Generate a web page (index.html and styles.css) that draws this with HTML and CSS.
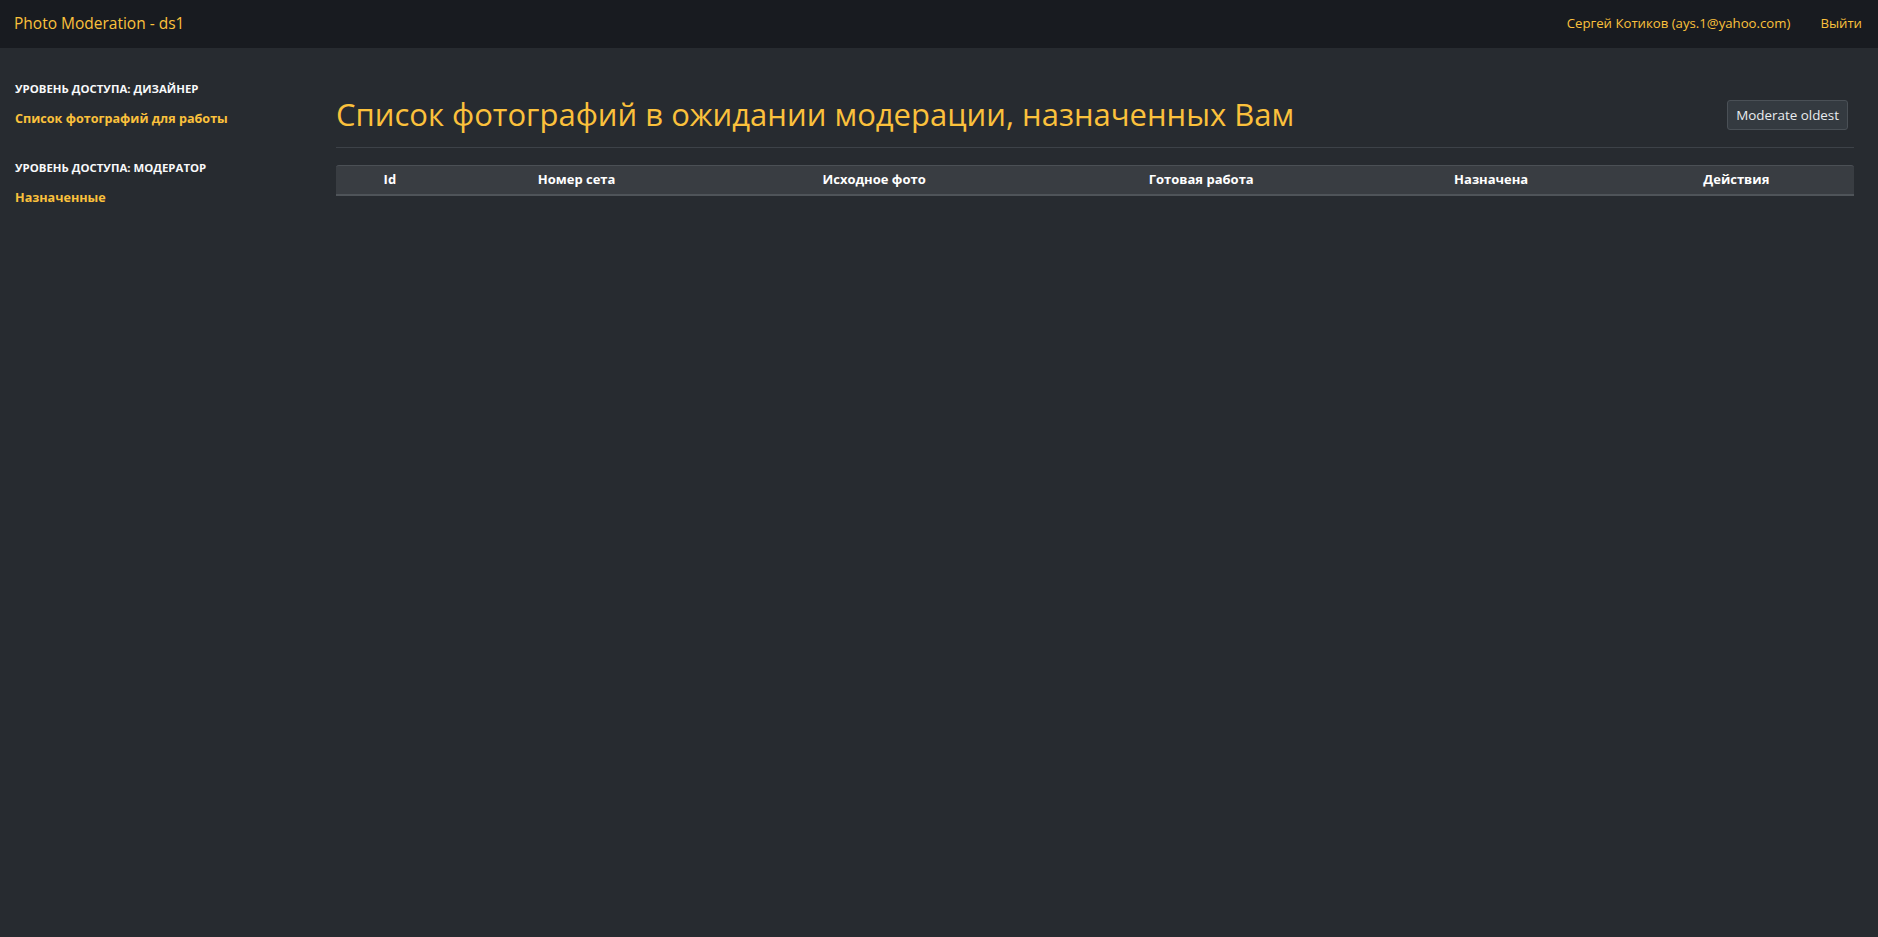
FILE: index.html
```html
<!DOCTYPE html>
<html lang="ru">
<head>
    <meta charset="UTF-8">
    <meta name="viewport" content="width=device-width, initial-scale=1.0">
    <title>Photo Moderation - ds1</title>
    <link rel="stylesheet" href="styles.css">
</head>
<body>
    <nav class="topbar">
        <a class="brand" href="#">Photo Moderation - ds1</a>
        <div class="user-nav">
            <a href="#">Сергей Котиков (ays.1@yahoo.com)</a>
            <a href="#">Выйти</a>
        </div>
    </nav>

    <div class="layout">
        <aside class="sidebar">
            <div class="side-group">
                <div class="side-title">Уровень доступа: дизайнер</div>
                <a class="side-link" href="#">Список фотографий для работы</a>
            </div>
            <div class="side-group">
                <div class="side-title">Уровень доступа: модератор</div>
                <a class="side-link" href="#">Назначенные</a>
            </div>
        </aside>

        <main class="content">
            <div class="page-head">
                <h2>Список фотографий в ожидании модерации, назначенных Вам</h2>
                <button class="btn">Moderate oldest</button>
            </div>

            <table class="photo-table">
                <thead>
                    <tr>
                        <th class="col-id">Id</th>
                        <th class="col-set">Номер сета</th>
                        <th class="col-src">Исходное фото</th>
                        <th class="col-done">Готовая работа</th>
                        <th class="col-assigned">Назначена</th>
                        <th class="col-actions">Действия</th>
                    </tr>
                </thead>
                <tbody></tbody>
            </table>
        </main>
    </div>
</body>
</html>
```

FILE: styles.css
```css
* {
    box-sizing: border-box;
}
html, body {
    height: 100%;
}
body {
    margin: 0;
    font-family: "Open Sans", "Noto Sans", sans-serif;
    font-size: 14px;
    line-height: 1.5;
    background: #272b30;
    color: #e9ecef;
}
a {
    color: #fbc13c;
    text-decoration: none;
}
.topbar {
    height: 48px;
    background: #181b20;
    display: flex;
    align-items: center;
    justify-content: space-between;
    padding: 0 16px 0 14px;
}
.brand {
    font-size: 15.5px;
}
.user-nav {
    display: flex;
    gap: 30px;
    font-size: 13.2px;
}
.layout {
    display: flex;
}
.sidebar {
    width: 336px;
    flex-shrink: 0;
    padding: 32px 15px;
}
.side-group {
    margin-bottom: 30px;
}
.side-title {
    font-size: 11.4px;
    font-weight: 700;
    text-transform: uppercase;
    color: #f8f9fa;
    margin-bottom: 10px;
}
.side-link {
    font-size: 12.6px;
    font-weight: 700;
}
.content {
    flex: 1;
    padding: 0 24px 0 0;
}
.page-head {
    display: flex;
    align-items: center;
    justify-content: space-between;
    margin-top: 45px;
    padding: 0 6px 11px 0;
    border-bottom: 1px solid #3d4248;
}
.page-head h2 {
    margin: 0;
    font-size: 31px;
    font-weight: 500;
    line-height: 1.4;
    color: #fbc13c;
}
.btn {
    font-family: inherit;
    font-size: 13.4px;
    line-height: 1.5;
    padding: 4px 8px;
    color: #e9ecef;
    background: #343a40;
    border: 1px solid #4a5056;
    border-radius: 3px;
    cursor: pointer;
}
.photo-table {
    width: 100%;
    margin-top: 17px;
    border-collapse: separate;
    border-spacing: 0;
    table-layout: fixed;
}
.photo-table th {
    height: 30px;
    padding: 4px;
    font-size: 13px;
    font-weight: 700;
    color: #fff;
    text-align: center;
    background: #393d42;
    border-top: 1px solid #4b5055;
    border-bottom: 2px solid #4f5459;
}
.photo-table th:first-child {
    border-top-left-radius: 3px;
}
.photo-table th:last-child {
    border-top-right-radius: 3px;
}
.col-id { width: 7.1%; }
.col-set { width: 17.5%; }
.col-src { width: 21.7%; }
.col-done { width: 21.4%; }
.col-assigned { width: 16.8%; }
.col-actions { width: 15.5%; }
```
